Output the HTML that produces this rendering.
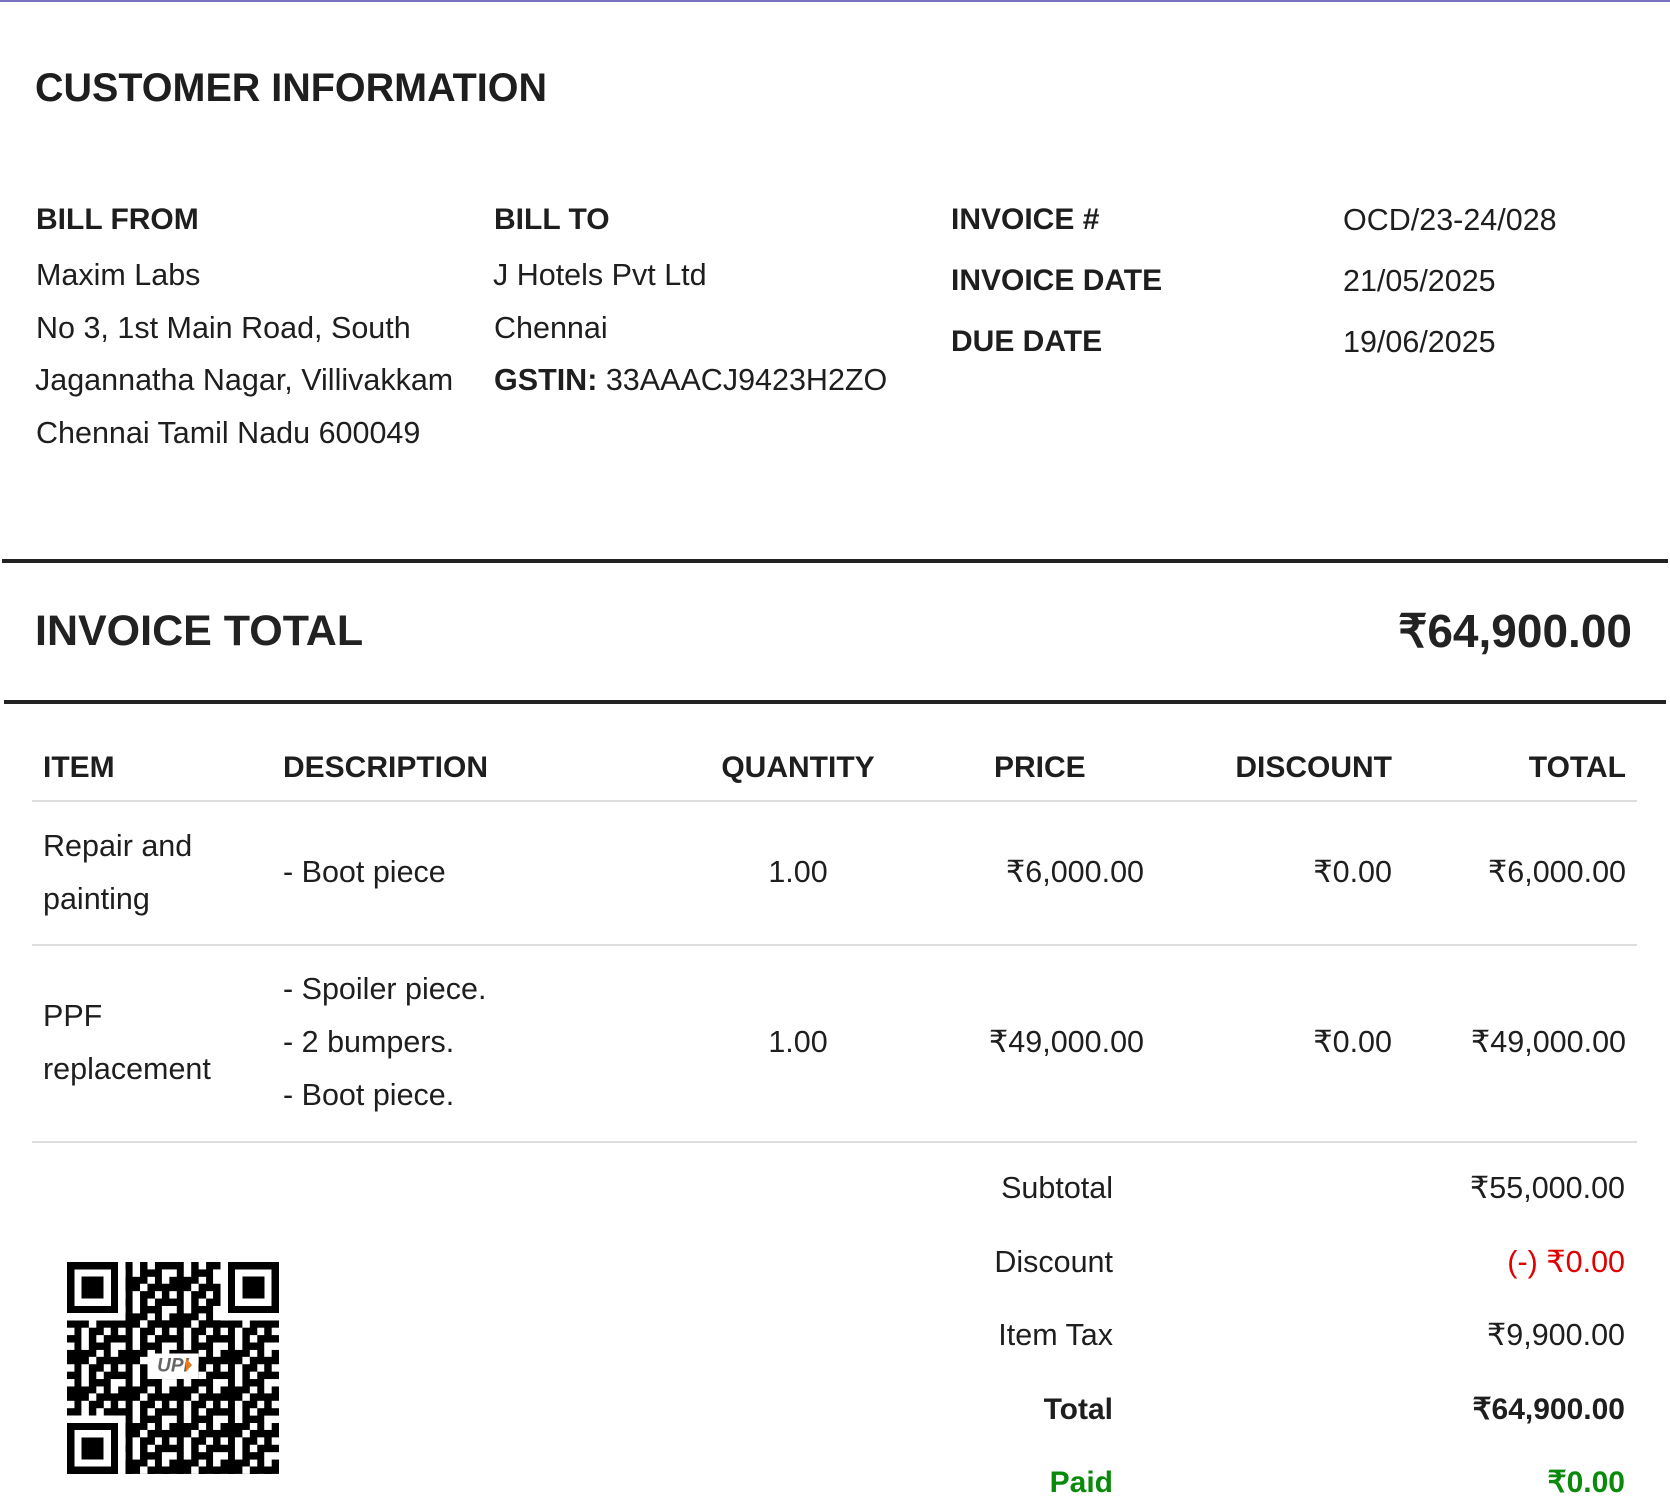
<!DOCTYPE html>
<html><head><meta charset="utf-8">
<style>
html,body{margin:0;padding:0;background:#fff;}
body{width:1670px;height:1500px;position:relative;overflow:hidden;font-family:"Liberation Sans",sans-serif;color:#1e1e1e;}
.t{position:absolute;white-space:nowrap;line-height:40px;height:40px;}
.b{font-weight:bold;}
.h{font-size:30px;font-weight:bold;}
.n{font-size:30.5px;}
.r{text-align:right;}
.c{text-align:center;}
.line{position:absolute;}
</style></head><body>
<div class="line" style="left:0;top:0;width:1670px;height:2px;background:#7a70c0"></div>

<div class="t b" style="left:35px;top:68px;font-size:39.5px;">CUSTOMER INFORMATION</div>

<div class="t h" style="left:36px;top:200px;">BILL FROM</div>
<div class="t n" style="left:36px;top:255px;">Maxim Labs</div>
<div class="t n" style="left:36px;top:308px;">No 3, 1st Main Road, South</div>
<div class="t n" style="left:35px;top:360px;">Jagannatha Nagar, Villivakkam</div>
<div class="t n" style="left:36px;top:413px;">Chennai Tamil Nadu 600049</div>

<div class="t h" style="left:494px;top:200px;">BILL TO</div>
<div class="t n" style="left:493px;top:255px;">J Hotels Pvt Ltd</div>
<div class="t n" style="left:494px;top:308px;">Chennai</div>
<div class="t n" style="left:494px;top:360px;"><b>GSTIN:</b> 33AAACJ9423H2ZO</div>

<div class="t h" style="left:951px;top:200px;">INVOICE #</div>
<div class="t h" style="left:951px;top:261px;">INVOICE DATE</div>
<div class="t h" style="left:951px;top:322px;">DUE DATE</div>
<div class="t n" style="left:1343px;top:200px;">OCD/23-24/028</div>
<div class="t n" style="left:1343px;top:261px;">21/05/2025</div>
<div class="t n" style="left:1343px;top:322px;">19/06/2025</div>

<div class="line" style="left:2px;top:559px;width:1666px;height:4px;background:#222"></div>
<div class="t b" style="left:35px;top:609px;font-size:43px;line-height:44px;height:44px;color:#222">INVOICE TOTAL</div>
<div class="t b r" style="right:38px;top:609px;font-size:46px;line-height:44px;height:44px;color:#222">₹64,900.00</div>
<div class="line" style="left:4px;top:700px;width:1662px;height:4px;background:#222"></div>

<div class="t h" style="left:43px;top:748px;">ITEM</div>
<div class="t h" style="left:283px;top:748px;">DESCRIPTION</div>
<div class="t h c" style="left:698px;width:200px;top:748px;">QUANTITY</div>
<div class="t h" style="left:994px;top:748px;">PRICE</div>
<div class="t h r" style="right:278px;top:748px;">DISCOUNT</div>
<div class="t h r" style="right:44px;top:748px;">TOTAL</div>
<div class="line" style="left:32px;top:800px;width:1605px;height:2px;background:#ddd"></div>

<div class="t n" style="left:43px;top:826px;">Repair and</div>
<div class="t n" style="left:43px;top:879px;">painting</div>
<div class="t n" style="left:283px;top:852px;">- Boot piece</div>
<div class="t n c" style="left:698px;width:200px;top:852px;">1.00</div>
<div class="t n r" style="right:526px;top:852px;">₹6,000.00</div>
<div class="t n r" style="right:278px;top:852px;">₹0.00</div>
<div class="t n r" style="right:44px;top:852px;">₹6,000.00</div>
<div class="line" style="left:32px;top:944px;width:1605px;height:2px;background:#ddd"></div>

<div class="t n" style="left:43px;top:996px;">PPF</div>
<div class="t n" style="left:43px;top:1049px;">replacement</div>
<div class="t n" style="left:283px;top:969px;">- Spoiler piece.</div>
<div class="t n" style="left:283px;top:1022px;">- 2 bumpers.</div>
<div class="t n" style="left:283px;top:1075px;">- Boot piece.</div>
<div class="t n c" style="left:698px;width:200px;top:1022px;">1.00</div>
<div class="t n r" style="right:526px;top:1022px;">₹49,000.00</div>
<div class="t n r" style="right:278px;top:1022px;">₹0.00</div>
<div class="t n r" style="right:44px;top:1022px;">₹49,000.00</div>
<div class="line" style="left:32px;top:1141px;width:1605px;height:2px;background:#ddd"></div>

<div class="t n r" style="right:557px;top:1168px;">Subtotal</div>
<div class="t n r" style="right:45px;top:1168px;">₹55,000.00</div>
<div class="t n r" style="right:557px;top:1242px;">Discount</div>
<div class="t n r" style="right:45px;top:1242px;color:#e00000">(-) ₹0.00</div>
<div class="t n r" style="right:557px;top:1315px;">Item Tax</div>
<div class="t n r" style="right:45px;top:1315px;">₹9,900.00</div>
<div class="t h r" style="right:557px;top:1390px;">Total</div>
<div class="t h r" style="right:45px;top:1390px;">₹64,900.00</div>
<div class="t h r" style="right:557px;top:1463px;color:#0a8a0a">Paid</div>
<div class="t h r" style="right:45px;top:1463px;color:#0a8a0a">₹0.00</div>

<svg style="position:absolute;left:67px;top:1262px" width="212" height="212" viewBox="0 0 29 29" shape-rendering="crispEdges">
<defs>
<pattern id="p" width="7" height="5" patternUnits="userSpaceOnUse">
<path d="M0 0h2v1H0zM3 0h1v2H3zM5 0h2v1H5zM1 1h1v2H1zM4 1h2v1H4zM0 2h1v1H0zM2 2h2v1H2zM5 2h1v2H5zM0 3h3v1H0zM4 3h1v1H4zM6 3h1v2H6zM1 4h1v1H1zM3 4h2v1H3z" fill="#000"/>
</pattern>
</defs>
<rect width="29" height="29" fill="url(#p)"/>
<rect x="0" y="0" width="8" height="8" fill="#fff"/><rect x="21" y="0" width="8" height="8" fill="#fff"/><rect x="0" y="21" width="8" height="8" fill="#fff"/>
<path d="M0 0h7v7H0zM1 1v5h5V1z" fill="#000" fill-rule="evenodd"/><rect x="2" y="2" width="3" height="3"/>
<path d="M22 0h7v7h-7zM23 1v5h5V1z" fill="#000" fill-rule="evenodd"/><rect x="24" y="2" width="3" height="3"/>
<path d="M0 22h7v7H0zM1 23v5h5v-5z" fill="#000" fill-rule="evenodd"/><rect x="2" y="24" width="3" height="3"/>
<rect x="11" y="12.5" width="7" height="3.5" fill="#fff"/>
<text x="14.5" y="15" font-size="2.6" font-style="italic" font-weight="bold" fill="#666" text-anchor="middle" font-family="Liberation Sans">UPI</text>
<path d="M16.3 13.2l0.8 0.9l-0.8 0.9z" fill="#e87a1e"/>
</svg>
</body></html>
